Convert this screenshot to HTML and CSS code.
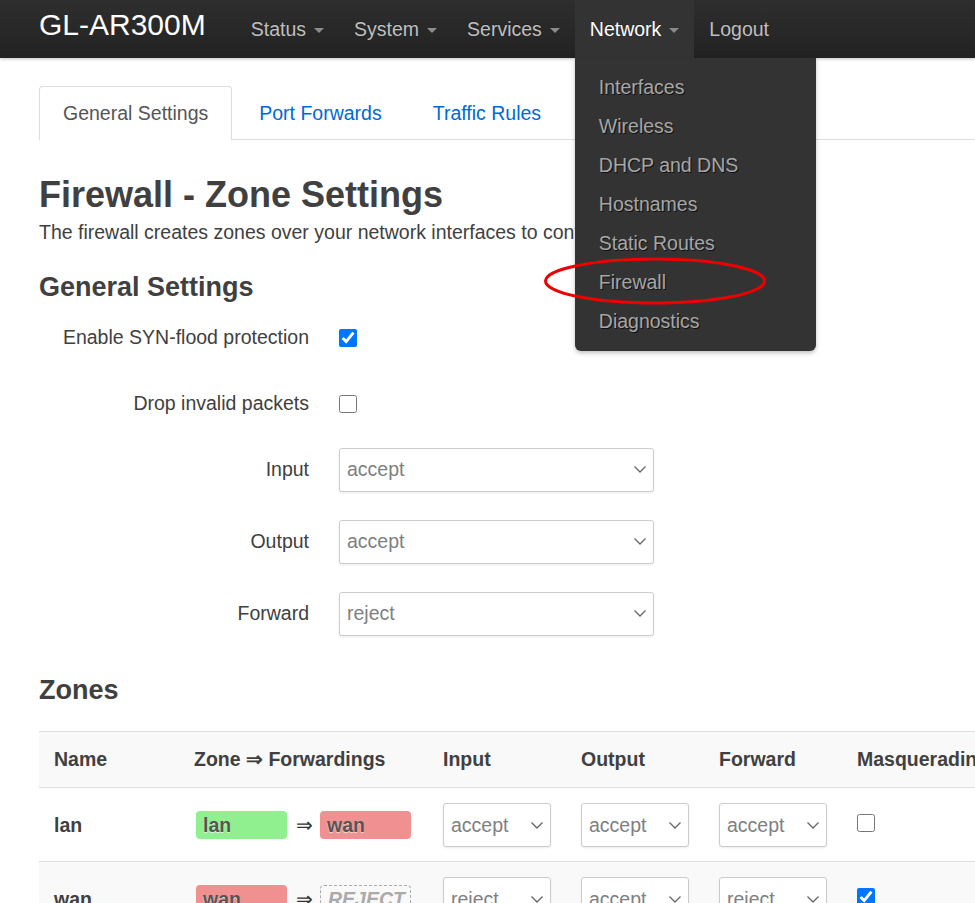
FILE: index.html
```html
<!DOCTYPE html>
<html lang="en">
<head>
<meta charset="utf-8">
<title>GL-AR300M - Firewall</title>
<link rel="stylesheet" href="styles.css">
</head>
<body>
<header class="topbar">
  <a class="brand" href="#">GL-AR300M</a>
  <ul class="nav">
    <li class="nav-item"><a href="#">Status<span class="caret"></span></a></li>
    <li class="nav-item"><a href="#">System<span class="caret"></span></a></li>
    <li class="nav-item"><a href="#">Services<span class="caret"></span></a></li>
    <li class="nav-item active"><a href="#">Network<span class="caret"></span></a>
      <ul class="dropdown-menu">
        <li><a href="#">Interfaces</a></li>
        <li><a href="#">Wireless</a></li>
        <li><a href="#">DHCP and DNS</a></li>
        <li><a href="#">Hostnames</a></li>
        <li><a href="#">Static Routes</a></li>
        <li><a href="#">Firewall</a></li>
        <li><a href="#">Diagnostics</a></li>
      </ul>
    </li>
    <li class="nav-item"><a href="#">Logout</a></li>
  </ul>
</header>

<svg class="highlight" width="226" height="50" viewBox="0 0 226 50" aria-hidden="true">
  <ellipse cx="113" cy="25" rx="109.5" ry="22" fill="none" stroke="#ee0000" stroke-width="3"/>
</svg>

<main class="container">
  <ul class="tabs">
    <li class="tab active"><a href="#">General Settings</a></li>
    <li class="tab"><a href="#">Port Forwards</a></li>
    <li class="tab"><a href="#">Traffic Rules</a></li>
  </ul>

  <h1 class="title">Firewall - Zone Settings</h1>
  <p class="desc">The firewall creates zones over your network interfaces to control network traffic flow.</p>

  <h2 class="section">General Settings</h2>
  <div class="form">
    <div class="row cb">
      <label class="lbl">Enable SYN-flood protection</label>
      <input class="check" type="checkbox" checked>
    </div>
    <div class="row cb">
      <label class="lbl">Drop invalid packets</label>
      <input class="check" type="checkbox">
    </div>
    <div class="row sel">
      <label class="lbl">Input</label>
      <div class="select wide"><span>accept</span><svg class="chev" width="12" height="7" viewBox="0 0 12 7"><polyline points="0.5,0.5 6,6 11.5,0.5" fill="none" stroke="#666" stroke-width="1.3"/></svg></div>
    </div>
    <div class="row sel">
      <label class="lbl">Output</label>
      <div class="select wide"><span>accept</span><svg class="chev" width="12" height="7" viewBox="0 0 12 7"><polyline points="0.5,0.5 6,6 11.5,0.5" fill="none" stroke="#666" stroke-width="1.3"/></svg></div>
    </div>
    <div class="row sel">
      <label class="lbl">Forward</label>
      <div class="select wide"><span>reject</span><svg class="chev" width="12" height="7" viewBox="0 0 12 7"><polyline points="0.5,0.5 6,6 11.5,0.5" fill="none" stroke="#666" stroke-width="1.3"/></svg></div>
    </div>
  </div>

  <h2 class="section zones">Zones</h2>
  <table class="ztable">
    <colgroup>
      <col class="c-name"><col class="c-zone"><col class="c-pol"><col class="c-pol"><col class="c-pol"><col class="c-masq"><col class="c-rest">
    </colgroup>
    <thead>
      <tr>
        <th>Name</th><th>Zone ⇒ Forwardings</th><th>Input</th><th>Output</th><th>Forward</th><th>Masquerading</th><th>MSS clamping</th>
      </tr>
    </thead>
    <tbody>
      <tr class="odd">
        <td class="zname">lan</td>
        <td><span class="badge src green">lan</span><span class="arrow">⇒</span><span class="badge red">wan</span></td>
        <td><div class="select small"><span>accept</span><svg class="chev" width="12" height="7" viewBox="0 0 12 7"><polyline points="0.5,0.5 6,6 11.5,0.5" fill="none" stroke="#666" stroke-width="1.3"/></svg></div></td>
        <td><div class="select small"><span>accept</span><svg class="chev" width="12" height="7" viewBox="0 0 12 7"><polyline points="0.5,0.5 6,6 11.5,0.5" fill="none" stroke="#666" stroke-width="1.3"/></svg></div></td>
        <td><div class="select small"><span>accept</span><svg class="chev" width="12" height="7" viewBox="0 0 12 7"><polyline points="0.5,0.5 6,6 11.5,0.5" fill="none" stroke="#666" stroke-width="1.3"/></svg></div></td>
        <td><input class="check" type="checkbox"></td>
        <td><input class="check" type="checkbox"></td>
      </tr>
      <tr class="even">
        <td class="zname">wan</td>
        <td><span class="badge src red">wan</span><span class="arrow">⇒</span><span class="badge reject">REJECT</span></td>
        <td><div class="select small"><span>reject</span><svg class="chev" width="12" height="7" viewBox="0 0 12 7"><polyline points="0.5,0.5 6,6 11.5,0.5" fill="none" stroke="#666" stroke-width="1.3"/></svg></div></td>
        <td><div class="select small"><span>accept</span><svg class="chev" width="12" height="7" viewBox="0 0 12 7"><polyline points="0.5,0.5 6,6 11.5,0.5" fill="none" stroke="#666" stroke-width="1.3"/></svg></div></td>
        <td><div class="select small"><span>reject</span><svg class="chev" width="12" height="7" viewBox="0 0 12 7"><polyline points="0.5,0.5 6,6 11.5,0.5" fill="none" stroke="#666" stroke-width="1.3"/></svg></div></td>
        <td><input class="check" type="checkbox" checked></td>
        <td><input class="check" type="checkbox" checked></td>
      </tr>
    </tbody>
  </table>
</main>
</body>
</html>
```

FILE: styles.css
```css
html, body {
  margin: 0;
  padding: 0;
  overflow: hidden;
}
body {
  position: relative;
  font-family: "Liberation Sans", Arial, sans-serif;
  font-size: 19.5px;
  color: #404040;
  background: #fff;
  width: 975px;
  height: 903px;
}
a { text-decoration: none; }
ul { list-style: none; margin: 0; padding: 0; }

/* top bar */
.topbar {
  position: relative;
  z-index: 10;
  display: flex;
  align-items: flex-start;
  height: 58px;
  padding-left: 39px;
  background: linear-gradient(#2e2e2e, #222);
  box-shadow: 0 1px 3px rgba(0,0,0,0.25);
}
.brand {
  color: #fff;
  font-size: 30px;
  line-height: 50px;
  margin-right: 30px;
}
.nav { display: flex; height: 58px; }
.nav-item { position: relative; }
.nav-item > a {
  display: flex;
  align-items: center;
  height: 58px;
  line-height: 56px;
  padding: 0 15px;
  color: #bfbfbf;
  text-shadow: 0 -1px 0 rgba(0,0,0,0.25);
}
.nav-item.active > a {
  background: #333;
  color: #fff;
}
.caret {
  display: inline-block;
  width: 0;
  height: 0;
  margin-left: 8px;
  margin-top: 2px;
  border-left: 5.5px solid transparent;
  border-right: 5.5px solid transparent;
  border-top: 5.5px solid #8c8c8c;
}
.nav-item.active .caret { border-top-color: #8a8a8a; }

.dropdown-menu {
  position: absolute;
  top: 58px;
  left: 0;
  width: 241px;
  padding: 10px 0;
  background: #333;
  border-radius: 0 0 6px 6px;
  box-shadow: 0 2px 4px rgba(0,0,0,0.25);
}
.dropdown-menu a {
  display: block;
  height: 39px;
  line-height: 39px;
  padding-left: 24px;
  color: #a6a6a6;
  text-shadow: 1px 1px 0 #111;
}

.highlight {
  position: absolute;
  left: 542px;
  top: 256px;
  z-index: 20;
}

/* content */
.container {
  margin-left: 39px;
  width: 1200px;
}
.tabs {
  display: flex;
  margin-top: 28px;
  border-bottom: 1px solid #ddd;
  height: 53px;
}
.tab { margin-right: 3px; }
.tab a {
  display: block;
  line-height: 52px;
  padding: 0 23px;
  border: 1px solid transparent;
  border-bottom: 0;
  border-radius: 4px 4px 0 0;
  color: #0069d6;
}
.tab.active a {
  color: #555;
  background: #fff;
  border-color: #ddd;
  box-sizing: border-box;
  line-height: 52px;
  position: relative;
  margin-bottom: -1px;
  height: 54px;
}

.title {
  font-size: 36px;
  font-weight: bold;
  line-height: 1.2;
  margin: 33px 0 0;
  color: #404040;
}
.desc {
  margin: 2px 0 0;
  line-height: 29.25px;
}
.section {
  font-size: 27px;
  font-weight: bold;
  line-height: 1.2;
  margin: 24px 0 0;
  color: #404040;
}
.form { margin-top: 12px; }
.row {
  display: flex;
  align-items: center;
  height: 44px;
}
.row.cb { margin-bottom: 22px; }
.row.sel { margin-bottom: 28px; }
.row.sel:last-child { margin-bottom: 0; }
.lbl {
  width: 270px;
  margin-right: 30px;
  text-align: right;
  color: #404040;
}
.check {
  width: 18px;
  height: 18px;
  margin: 0;
  accent-color: #0075ff;
}

.select {
  display: flex;
  align-items: center;
  justify-content: space-between;
  box-sizing: border-box;
  height: 44px;
  padding: 0 7px 0 7px;
  border: 1px solid #ccc;
  border-radius: 3px;
  background: #fff;
  color: #808080;
  box-shadow: 0 1px 2px rgba(0,0,0,0.08);
}
.select.wide { width: 315px; }
.select.small { width: 108px; }

.section.zones { margin-top: 38px; }

.ztable {
  margin-top: 25px;
  border-collapse: separate;
  border-spacing: 0;
  table-layout: fixed;
  width: 1120px;
}
.c-name { width: 140px; }
.c-zone { width: 249px; }
.c-pol { width: 138px; }
.c-masq { width: 190px; }
.ztable th, .ztable td {
  text-align: left;
  border-top: 1px solid #ddd;
  padding: 0 15px;
  vertical-align: middle;
  white-space: nowrap;
}
.ztable th {
  height: 55px;
  font-weight: bold;
  background: #f9f9f9;
  color: #404040;
}
.ztable td { height: 72px; padding-top: 1px; }
.ztable tr.even td { background: #f9f9f9; }
.zname { font-weight: bold; }

.badge {
  display: inline-block;
  box-sizing: border-box;
  width: 91px;
  height: 28px;
  line-height: 28px;
  padding-left: 7px;
  border-radius: 4px;
  color: #555;
  font-weight: bold;
  text-shadow: 0 1px 1px rgba(255,255,255,0.7);
  vertical-align: middle;
}
.badge.src { margin-left: 2px; }
.badge.green { background: #90f090; }
.badge.red { background: #f09090; }
.badge.reject {
  border: 1px dashed #aaa;
  color: #aaa;
  font-style: italic;
  font-weight: bold;
  line-height: 26px;
  text-shadow: none;
}
.arrow {
  display: inline-block;
  margin: 0 7px 0 9px;
  font-size: 19.5px;
  vertical-align: middle;
  color: #333;
}
```
